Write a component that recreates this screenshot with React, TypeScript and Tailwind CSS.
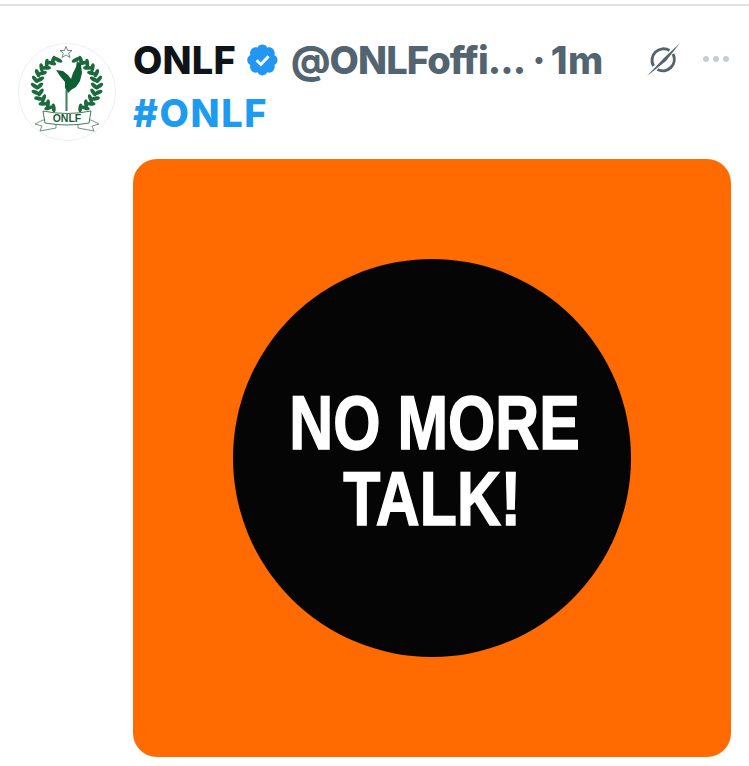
const leafAngles = [22, 36, 50, 64, 78, 92, 106, 120, 134, 148]

function Branch() {
    return (
        <g>
            {leafAngles.map((a) => {
                const rad = (a * Math.PI) / 180
                const x = 49 - 30 * Math.sin(rad)
                const y = 42 - 27 * Math.cos(rad)
                const tangent = -a - 90
                return (
                    <g key={a}>
                        <ellipse cx={x - 2.5} cy={y} rx="4.4" ry="2" fill="#1d6b3c" transform={`rotate(${tangent + 40} ${x - 2.5} ${y})`} />
                        <ellipse cx={x + 2.5} cy={y} rx="4.4" ry="2" fill="#1d6b3c" transform={`rotate(${tangent - 40} ${x + 2.5} ${y})`} />
                    </g>
                )
            })}
        </g>
    )
}

function OnlfLogo() {
    return (
        <svg viewBox="0 0 98 98" className="w-full h-full">
            <circle cx="49" cy="49" r="48.500" fill="#ffffff" stroke="#eeeeee" />
            <polygon
                points="48,3.500 49.700,7.500 54,7.500 50.700,10.300 52,14.500 48,12 44,14.500 45.300,10.300 42,7.500 46.300,7.500"
                fill="#ffffff"
                stroke="#5f7f6c"
                strokeWidth="0.9"
            />
            <Branch />
            <g transform="translate(98 0) scale(-1 1)">
                <Branch />
            </g>
            <path
                d="M38 27 L45 28 L50 32 L53 36 L55 30 L58 24 L59 18 L63 22 L64 30 L62 38 L58 44 L53 47 L50 50 L47 45 L47 39 L42 33 Z"
                fill="#0f5f35"
            />
            <rect x="47.500" y="47" width="2" height="21" fill="#3f7f5a" />
            <path d="M25 77 L17 81 L24 83 L22 88 L38 85 L38 78 Z" fill="#ffffff" stroke="#4f7a62" strokeWidth="0.8" />
            <path d="M73 77 L81 81 L74 83 L76 88 L60 85 L60 78 Z" fill="#ffffff" stroke="#4f7a62" strokeWidth="0.8" />
            <path d="M25 68 Q49 73 73 68 L71 80 Q49 84 27 80 Z" fill="#ffffff" stroke="#2f6b4b" strokeWidth="0.9" />
            <text
                x="49"
                y="79"
                textAnchor="middle"
                fontSize="10.500"
                fontWeight="700"
                fill="#1d5c3a"
                fontFamily="'Liberation Sans', sans-serif"
            >
                ONLF
            </text>
        </svg>
    )
}

function VerifiedBadge() {
    return (
        <svg viewBox="0 0 22 22" className="w-[34px] h-[34px] shrink-0">
            <path
                fill="#2196f3"
                d="M20.400 11c0-1.400-.8-2.700-2-3.300.4-1.300.1-2.800-.9-3.800s-2.400-1.300-3.700-.9C13.200 1.800 12 1 10.600 1S8 1.800 7.400 3c-1.300-.4-2.700-.1-3.700.9s-1.300 2.500-.9 3.800C1.600 8.300.8 9.600.8 11s.8 2.700 2 3.300c-.4 1.300-.1 2.800.9 3.800s2.400 1.300 3.700.9c.6 1.200 1.800 2 3.200 2s2.600-.8 3.200-2c1.300.4 2.700.1 3.700-.9s1.300-2.500.9-3.800c1.200-.6 2-1.900 2-3.300z"
            />
            <path d="M6.900 11.200l2.700 2.700 5-5.400" fill="none" stroke="#ffffff" strokeWidth="1.900" />
        </svg>
    )
}

function GrokIcon() {
    return (
        <svg viewBox="0 0 34 34" className="w-[34px] h-[34px] shrink-0">
            <path
                d="M22.500 7.500 A11.500 11.500 0 0 0 6.500 23 M10.500 26.500 A11.500 11.500 0 0 0 26 11"
                fill="none"
                stroke="#536471"
                strokeWidth="3"
            />
            <path d="M33 0 L17 15 L0 33 L19 18 Z" fill="#536471" />
        </svg>
    )
}

export default function App() {
    return (
        <div className="w-[749px] h-[766px] bg-white overflow-hidden font-['Inter',sans-serif]">
            <div className="mt-[4px] h-[2px] bg-[#e3e3e3]" />
            <div className="flex pl-[18px] pt-[37px]">
                <div className="w-[98px] h-[98px] shrink-0">
                    <OnlfLogo />
                </div>
                <div className="ml-[17px] w-[598px]">
                    <div className="flex items-center h-[38px] -mt-[2px] text-[38px] font-extrabold leading-none whitespace-nowrap">
                        <span className="text-[#0f1419] tracking-[0.2px]">ONLF</span>
                        <span className="ml-[10px]"><VerifiedBadge /></span>
                        <span className="ml-[11px] text-[#536471] tracking-[-0.9px]">@ONLFoffi...</span>
                        <span className="ml-[7px] text-[#536471]">·</span>
                        <span className="ml-[5px] text-[#536471] tracking-[0.5px]">1m</span>
                        <span className="ml-[43px]"><GrokIcon /></span>
                        <div className="ml-[22px] flex gap-[4px] -mt-[2px]">
                            <span className="w-[6px] h-[6px] rounded-full bg-[#c4cdd5]" />
                            <span className="w-[6px] h-[6px] rounded-full bg-[#c4cdd5]" />
                            <span className="w-[6px] h-[6px] rounded-full bg-[#c4cdd5]" />
                        </div>
                    </div>
                    <div className="mt-[15px] h-[38px] flex items-center text-[38px] font-extrabold tracking-[1.6px] leading-none text-[#1d9bf0]">
                        #ONLF
                    </div>
                    <div className="mt-[27px] w-[598px] h-[598px] rounded-[24px] bg-[#ff6b00] flex items-center justify-center">
                        <div className="w-[398px] h-[398px] rounded-full bg-[#050505] pl-[5px] pt-[5px] flex flex-col items-center justify-center text-white font-['Liberation_Sans',sans-serif] font-bold text-[76px] leading-[76px] [-webkit-text-stroke:1.5px_white]">
                            <span className="scale-x-[0.8] whitespace-nowrap">NO MORE</span>
                            <span className="-ml-[4px] scale-x-[0.8] whitespace-nowrap">TALK!</span>
                        </div>
                    </div>
                </div>
            </div>
        </div>
    )
}
